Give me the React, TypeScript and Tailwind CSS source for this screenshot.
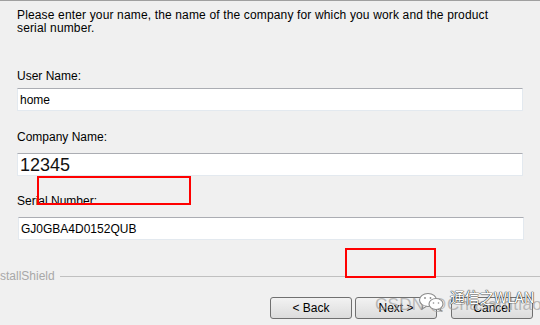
import React from "react";

// InstallShield "Customer Information" page, lower part of the wizard, with the red
// annotation boxes and the blog watermark laid over it.

const FONT = "font-['Liberation_Sans',Arial,sans-serif]";

function Field({ value, big = false }: { value: string; big?: boolean }) {
  return (
    <div className="flex h-[23px] w-[506px] items-center border border-[#e3e9ef] border-t-[#abadb3] bg-white pl-[2px]">
      {big ? (
        <span className="text-[18px] leading-none text-[#111] pt-[1px]">{value}</span>
      ) : (
        <span className="text-[12px] leading-none text-black">{value}</span>
      )}
    </div>
  );
}

function Btn({ label }: { label: string }) {
  return (
    <button
      type="button"
      className="flex h-[22px] w-[82px] items-center justify-center rounded-[3px] border border-[#707070] bg-gradient-to-b from-[#f2f2f2] to-[#dcdcdc] text-[12px] leading-none text-black"
    >
      {label}
    </button>
  );
}

function WeChatIcon() {
  return (
    <svg width="28" height="20" viewBox="0 0 28 20" fill="none" stroke="#8a8a8a" strokeWidth="1.1">
      <ellipse cx="10" cy="8" rx="8.5" ry="6.5" fill="white" />
      <path d="M5 13.5 L4 17 L8.5 14.3" fill="white" />
      <ellipse cx="18" cy="12" rx="7" ry="5.5" fill="white" />
      <path d="M22 16.5 L23.5 19 L20 17.2" fill="white" />
      <circle cx="7" cy="6" r="0.9" fill="#8a8a8a" stroke="none" />
      <circle cx="12.5" cy="6" r="0.9" fill="#8a8a8a" stroke="none" />
      <circle cx="15.5" cy="11" r="0.8" fill="#8a8a8a" stroke="none" />
      <circle cx="20.5" cy="11" r="0.8" fill="#8a8a8a" stroke="none" />
    </svg>
  );
}

export default function App() {
  return (
    <div className={`relative h-[325px] w-[540px] overflow-hidden border-t border-[#a0a0a0] bg-[#f0f0f0] ${FONT}`}>
      <div className="flex flex-col pl-[17px]">
        <p className="mt-[8px] w-[480px] text-[12px] leading-[13px] tracking-[0.15px] text-black">
          Please enter your name, the name of the company for which you work and the product serial number.
        </p>

        <div className="mt-[35px] text-[12px] leading-[13px] text-black">User Name:</div>
        <div className="mt-[5px]">
          <Field value="home" />
        </div>

        <div className="mt-[20px] text-[12px] leading-[13px] text-black">Company Name:</div>
        <div className="mt-[9px]">
          <Field value="12345" big />
        </div>

        <div className="mt-[19px] text-[12px] leading-[13px] text-black">Serial Number:</div>
        <div className="mt-[9px] pl-[1px]">
          <Field value="GJ0GBA4D0152QUB" />
        </div>
      </div>

      {/* InstallShield separator */}
      <div className="mt-[30px] flex items-center">
        <span className="-ml-[10px] text-[12px] leading-none text-[#a8a8a8]">InstallShield</span>
        <div className="ml-[5px] h-px flex-1 bg-[#c0c0c0]" />
      </div>

      <div className="mt-[15px] flex pl-[270px]">
        <Btn label="< Back" />
        <div className="ml-[3px]">
          <Btn label="Next >" />
        </div>
        <div className="ml-[14px]">
          <Btn label="Cancel" />
        </div>
      </div>

      {/* annotation boxes */}
      <div className="absolute left-[37px] top-[175px] h-[29px] w-[154px] border-2 border-[#ff0000]" />
      <div className="absolute left-[345px] top-[247px] h-[30px] w-[91px] border-2 border-[#ff0000]" />

      {/* watermark */}
      <div className="absolute left-[375px] top-[295px] whitespace-nowrap text-[17px] leading-none tracking-[0.3px] text-[#a0a0a0]/70">
        CSDN @Chasardtiao
      </div>
      <div className="absolute left-[418px] top-[291px]">
        <WeChatIcon />
      </div>
      <div className="absolute left-[450px] top-[288px] whitespace-nowrap font-['Noto_Sans_CJK_SC',sans-serif] text-[15px] leading-none tracking-[-0.3px] text-white [text-shadow:0_0_1px_#333,0_0_1px_#333,0_0_1px_#333]">
        通信之WLAN
      </div>
    </div>
  );
}
